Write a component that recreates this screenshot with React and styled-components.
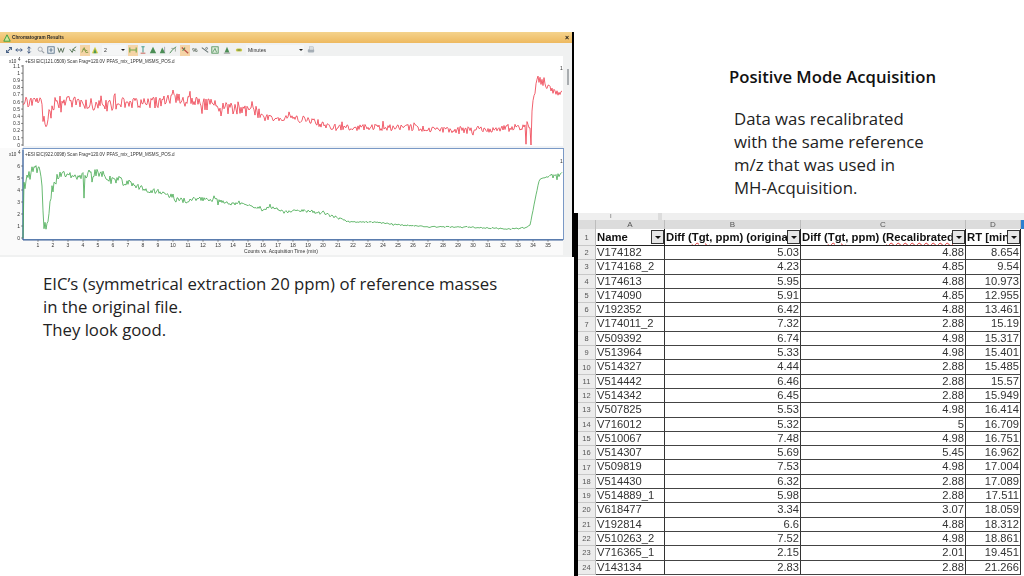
import React, { useMemo } from "react";
import styled, { createGlobalStyle } from "styled-components";

const Global = createGlobalStyle`
  html, body { margin: 0; padding: 0; background: #fff; }
  body { width: 1024px; height: 576px; overflow: hidden; font-family: "Open Sans", sans-serif; }
`;

const Page = styled.div`
  display: flex;
  width: 1024px;
  height: 576px;
  overflow: hidden;
  background: #fff;
`;
const LeftColumn = styled.section`
  width: 574px;
  flex: none;
  padding-top: 32px;
  box-sizing: border-box;
`;
const RightColumn = styled.section`
  flex: 1;
  display: flex;
  flex-direction: column;
  min-width: 0;
`;
const ChromWindow = styled.div`
  height: 225px;
  box-sizing: border-box;
  border-right: 2px solid #000;
  background: #f0f1f1;
  display: flex;
  flex-direction: column;
  filter: blur(0.35px);
`;
const TitleBar = styled.div`
  height: 11px;
  flex: none;
  display: flex;
  align-items: center;
  gap: 1px;
  padding: 0 3px;
  background: linear-gradient(#f4d38d, #eeb95f);
  font: bold 4.7px "Liberation Sans", sans-serif;
  color: #2a2a2a;
`;
const CloseMark = styled.span`
  margin-left: auto;
  font-size: 7px;
  line-height: 1;
  color: #111;
`;
const Toolbar = styled.div`
  height: 13px;
  flex: none;
  display: flex;
  align-items: center;
  padding: 1px 0 0 4px;
  box-sizing: border-box;
  gap: 2px;
  background: #f0f1f1;
`;
const ToolGroup = styled.div`
  display: flex;
  align-items: center;
`;
const ToolButton = styled.span`
  width: 10px;
  height: 11px;
  display: flex;
  align-items: center;
  justify-content: center;
  background: ${(p) => (p.$on ? "#f7cf9a" : "transparent")};
  font: bold 6px "Liberation Sans", sans-serif;
  color: #3a4a3a;
  opacity: 0.85;
`;
const ToolSelect = styled.span`
  width: ${(p) => p.$w}px;
  height: 10px;
  flex: none;
  display: flex;
  align-items: center;
  justify-content: space-between;
  box-sizing: border-box;
  padding: 0 1px 0 2px;
  background: #f5f6f6;
  font: 5.2px "Liberation Sans", sans-serif;
  color: #333;
  &::after {
    content: "";
    border: 2px solid transparent;
    border-top: 2.5px solid #222;
    border-bottom: 0;
  }
`;
const Plot = styled.svg`
  display: block;
  flex: none;
  width: 572px;
  height: ${(p) => p.$h}px;
  text {
    font-family: "Liberation Sans", sans-serif;
    font-size: 5px;
    fill: #333;
  }
`;
const TraceLabel = styled.text`
  && { font-size: 4.56px; }
`;
const Title = styled.h2`
  margin: 0;
  padding: 66px 0 0 155px;
  font: 600 16.7px/21px "Open Sans", sans-serif;
  color: #111;
`;
const Para = styled.p`
  margin: 0;
  font: 400 16.75px/23px "Open Sans", sans-serif;
  color: #222;
  white-space: pre-line;
`;
const RecalNote = styled(Para)`
  padding: 20px 0 0 160px;
`;
const Notes = styled.div`
  height: 213px;
  flex: none;
`;
const EicNote = styled(Para)`
  padding: 15px 0 0 43px;
`;
const Sheet = styled.div`
  flex: 1;
  border-left: 4px solid #000;
  background: #fff;
  display: flex;
  flex-direction: column;
  overflow: hidden;
  font-family: "Liberation Sans", sans-serif;
  filter: blur(0.25px);
`;
const Ruler = styled.div`
  height: 7px;
  flex: none;
  background: linear-gradient(90deg, #efefef 0 80px, #dcdcdc 80px 84px, #efefef 84px);
  font-size: 6px;
  line-height: 7px;
  color: #666;
  padding-left: 32px;
`;
const Grid = styled.div`
  display: grid;
  grid-template-columns: 18px 69px 136px 165px 55px 3px;
  grid-template-rows: 9px 17px repeat(24, 14.3px);
`;
const ColHead = styled.div`
  background: #dcdcdc;
  border-right: 1px solid #bdbdbd;
  font-size: 8px;
  line-height: 9px;
  text-align: center;
  color: #555;
  ${(p) => p.$accent && "background: #2a7fd0; border: 0;"}
`;
const RowHead = styled.div`
  background: #ececec;
  border-right: 1px solid #bbb;
  border-bottom: 1px solid #c8c8c8;
  font-size: 7.5px;
  text-align: center;
  color: #555;
  display: flex;
  align-items: center;
  justify-content: center;
`;
const Cell = styled.div`
  box-sizing: border-box;
  border-right: 1.2px solid #333;
  border-bottom: 1.2px solid #444;
  font-size: 11.2px;
  line-height: 13px;
  color: #333;
  padding: 0 1px;
  white-space: nowrap;
  overflow: hidden;
  text-align: ${(p) => (p.$num ? "right" : "left")};
`;
const HeadCell = styled.div`
  box-sizing: border-box;
  position: relative;
  border-right: 1.2px solid #222;
  border-bottom: 1.2px solid #222;
  font-size: 11.3px;
  font-weight: bold;
  line-height: 16px;
  color: #111;
  padding: 0 1px;
  white-space: nowrap;
  overflow: hidden;
`;
const FilterButton = styled.span`
  position: absolute;
  top: 1px;
  right: 0;
  width: 13px;
  height: 14px;
  box-sizing: border-box;
  background: #e6e6e6;
  border: 1px solid #333;
  display: flex;
  align-items: center;
  justify-content: center;
  &::after {
    content: "";
    border: 3px solid transparent;
    border-top: 3px solid #111;
    border-bottom: 0;
  }
`;
const Spell = styled.span`
  text-decoration: underline wavy #d33;
  text-decoration-thickness: 0.7px;
  text-underline-offset: 1px;
`;
const Blank = styled.div`
  background: #fff;
`;

/* ---------- chart data ---------- */
const RED = [[23,102],[30,101],[41,100],[43,118],[45,125],[50,112],[55,102],[70,102],[85,103],[100,106],[112,105],[125,102],[140,103],[160,103],[172,99],[190,101],[205,104],[220,107],[235,109],[250,111],[265,117],[290,118],[310,120],[330,127],[350,128],[400,127],[450,130],[500,129],[525,127],[526,145],[527,127],[530,127],[531,145],[532,112],[533,104],[535,90],[537,78],[545,84],[555,92],[562,95]];
const GREEN = [[23,238],[24,182],[30,172],[38,169],[41,175],[42,190],[44,228],[48,222],[52,190],[57,178],[65,173],[83,176],[84,197],[85,176],[100,172],[110,180],[130,183],[145,190],[160,192],[175,198],[185,200],[210,199],[230,203],[250,205],[262,210],[270,207],[285,212],[300,210],[325,214],[340,218],[348,222],[375,222],[390,224],[430,227],[470,227],[510,229],[525,228],[530,225],[534,205],[538,185],[540,179],[550,176],[562,175]];

function interp(pts, x) {
  for (let i = 1; i < pts.length; i++) {
    if (x <= pts[i][0]) {
      const [a, b] = pts[i - 1];
      const [c, d] = pts[i];
      return b + ((d - b) * (x - a)) / (c - a);
    }
  }
  return pts[pts.length - 1][1];
}
function tracePath(pts, ampAt, seed, floor) {
  let s = seed;
  const rnd = () => {
    s = (s * 16807) % 2147483647;
    return s / 2147483647 - 0.5;
  };
  let d = "";
  for (let x = pts[0][0]; x <= 562; x += 1) {
    const spike = rnd() > 0.4 ? 1.9 : 1;
    const y = Math.min(floor, interp(pts, x) + rnd() * ampAt(x) * spike);
    d += `${d ? "L" : "M"}${x} ${y.toFixed(1)}`;
  }
  return d;
}

const redAmp = (x) => (x < 270 ? 12 : x < 525 ? 7 : 7);
const greenAmp = (x) => (x < 24 ? 0 : x < 130 ? 9 : x < 220 ? 5 : x < 340 ? 3.2 : x < 525 ? 1.3 : x < 550 ? 1 : 6);

function AxisY({ ticks, x = 23 }) {
  return (
    <>
      {ticks.map(([label, y]) => (
        <g key={label}>
          <line x1={x - 2} x2={x} y1={y} y2={y} stroke="#444" strokeWidth="0.6" />
          <text x={x - 3} y={y + 1.7} textAnchor="end">{label}</text>
        </g>
      ))}
    </>
  );
}

function ChromPlots() {
  const red = useMemo(() => tracePath(RED, redAmp, 4711, 145), []);
  const green = useMemo(() => tracePath(GREEN, greenAmp, 991, 238), []);
  const redTicks = ["1.1","1","0.9","0.8","0.7","0.6","0.5","0.4","0.3","0.2","0.1","0"].map((l, i) => [l, 66 + i * 7.18]);
  const greenTicks = [6,5,4,3,2,1,0].map((n, i) => [String(n), 166 + i * 12]);
  const minutes = Array.from({ length: 35 }, (_, i) => i + 1);
  return (
    <>
      <Plot $h={92} viewBox="0 56 572 92">
        <rect x="0" y="56" width="563" height="92" fill="#fff" />
        <rect x="567" y="69" width="2" height="16" fill="#a9adb0" />
        <TraceLabel x="9" y="63">x10</TraceLabel>
        <TraceLabel x="18" y="61">4</TraceLabel>
        <TraceLabel x="25" y="63">+ESI EIC(121.0509) Scan Frag=120.0V PFAS_mix_1PPM_MSMS_POS.d</TraceLabel>
        <line x1="23" x2="23" y1="65" y2="146" stroke="#444" strokeWidth="0.8" />
        <AxisY ticks={redTicks} />
        <text x="560" y="70">1</text>
        <path d={red} fill="none" stroke="#ee4454" strokeWidth="0.85" />
        <line x1="23" x2="563" y1="147" y2="147" stroke="#d5dde6" strokeWidth="0.8" />
      </Plot>
      <Plot $h={109} viewBox="0 148 572 109">
        <rect x="0" y="148" width="563" height="107" fill="#fafafa" />
        <rect x="23" y="148.5" width="540.5" height="91" fill="#fff" stroke="#6d8fc0" strokeWidth="0.9" />
        <TraceLabel x="9" y="156">x10</TraceLabel>
        <TraceLabel x="18" y="154">4</TraceLabel>
        <TraceLabel x="25" y="156">+ESI EIC(922.0098) Scan Frag=120.0V PFAS_mix_1PPM_MSMS_POS.d</TraceLabel>
        <AxisY ticks={greenTicks} />
        <line x1="23" x2="23" y1="150" y2="240" stroke="#3a5f96" strokeWidth="1" />
        <line x1="23" x2="563" y1="240" y2="240" stroke="#3a5f96" strokeWidth="1" />
        <text x="560" y="163">1</text>
        <path d={green} fill="none" stroke="#43a84e" strokeWidth="0.8" />
        {minutes.map((m) => (
          <g key={m}>
            <line x1={23 + m * 15} x2={23 + m * 15} y1="240" y2="242" stroke="#444" strokeWidth="0.5" />
            <text x={23 + m * 15} y="246.5" textAnchor="middle">{m}</text>
          </g>
        ))}
        <text x="281" y="253" textAnchor="middle">Counts vs. Acquisition Time (min)</text>
      </Plot>
    </>
  );
}

/* ---------- toolbar icons ---------- */
const Ico = ({ children, size = 8 }) => (
  <svg width={size} height={size} viewBox="0 0 10 10" fill="none">{children}</svg>
);
const BLUE = "#22406e";
const GRN = "#2f7d3a";
const ICONS = {
  diag: <path d="M3 7L7 3M2 5V8H5M5 2H8V5" stroke={BLUE} strokeWidth="1.3" />,
  horiz: <path d="M1 5H9M3 3L1 5L3 7M7 3L9 5L7 7" stroke={BLUE} strokeWidth="1.2" />,
  vert: <path d="M5 1V9M3 3L5 1L7 3M3 7L5 9L7 7" stroke={BLUE} strokeWidth="1.2" />,
  lens: <><circle cx="4" cy="4" r="2.6" stroke="#8a9199" /><path d="M6 6L9 9" stroke="#8a9199" strokeWidth="1.4" /></>,
  box: <><rect x="1" y="1" width="8" height="8" stroke="#33506f" fill="#e8eef2" /><path d="M5 2.5V7.5M3 5H7" stroke="#33506f" /></>,
  peaks: <path d="M1 2L3 8L5 3L7 8L9 2" stroke="#3c5a3c" strokeWidth="1.2" />,
  check: <path d="M1 4L4 8L6 3M6 3L9 1M4 4L8 6" stroke="#39603a" strokeWidth="1.2" />,
  peakOn: <path d="M1 8L4 2L6 8H9M2 4L8 6" stroke="#6c8a20" strokeWidth="1.1" />,
  yellowTri: <><path d="M5 1L9 9H1Z" fill="#d7c92c" /><path d="M5 3L7 9H3Z" fill="#2f8a3a" /></>,
  hBar: <path d="M1 2V8M9 2V8M1 5H9" stroke="#5a9a2a" strokeWidth="1.4" />,
  tee: <><path d="M3 1H7M5 1V8" stroke="#2b8a7a" strokeWidth="1.3" /><path d="M2 9H8" stroke="#c0392b" strokeWidth="1.1" /></>,
  tri: <path d="M5 1L9 9H1Z" fill={GRN} />,
  triGrey: <><path d="M4 2L8 9H1Z" fill={GRN} /><path d="M7 1V8" stroke="#889" /></>,
  line: <><path d="M1 9L5 4L9 1" stroke={GRN} strokeWidth="1.2" /><path d="M3 3H8V7" stroke="#7a8a7a" /></>,
  hatch: <><path d="M1 2L9 9" stroke="#b3392b" strokeWidth="1.6" /><path d="M2 6L5 2" stroke={GRN} strokeWidth="1.3" /></>,
  slash: <><path d="M1 2L9 8" stroke="#4a5a5a" strokeWidth="1.3" /><circle cx="7" cy="3" r="1.2" stroke="#4a5a5a" /></>,
  gBox: <><rect x="1" y="1" width="8" height="8" stroke={GRN} fill="#dfeedd" /><path d="M2 8L5 3L7 8" stroke={GRN} /></>,
  triSm: <><path d="M5 1L8 8H2Z" fill={GRN} /><path d="M1 9H9" stroke="#777" /></>,
  pill: <><rect x="1" y="3" width="8" height="4" rx="2" fill="#c9c62c" /><rect x="3" y="4" width="4" height="2" fill="#6a8a2a" /></>,
  printer: <><rect x="1" y="4" width="8" height="4" rx="1" fill="#9aa4ad" /><rect x="3" y="1" width="5" height="4" fill="#d4dbe0" stroke="#8e979e" strokeWidth="0.5" /></>,
  logo: <><path d="M5 1L9 9H1Z" stroke="#2f9a3c" strokeWidth="1.1" fill="#cfe89a" /></>,
};
const Tool = ({ name, on }) => (
  <ToolButton $on={on}><Ico>{ICONS[name]}</Ico></ToolButton>
);

function ChromToolbar() {
  return (
    <Toolbar>
      <ToolGroup><Tool name="diag" /><Tool name="horiz" /><Tool name="vert" /></ToolGroup>
      <ToolGroup><Tool name="lens" /><Tool name="box" /><Tool name="peaks" /></ToolGroup>
      <ToolGroup><Tool name="check" /></ToolGroup>
      <ToolGroup><Tool name="peakOn" on /><Tool name="yellowTri" /></ToolGroup>
      <ToolSelect $w={24}>2</ToolSelect>
      <ToolGroup>
        <Tool name="hBar" on /><Tool name="tee" /><Tool name="tri" /><Tool name="triGrey" /><Tool name="line" />
      </ToolGroup>
      <ToolGroup>
        <Tool name="hatch" on /><ToolButton>%</ToolButton><Tool name="slash" /><Tool name="gBox" />
      </ToolGroup>
      <ToolGroup><Tool name="triSm" /></ToolGroup>
      <ToolGroup><Tool name="pill" /></ToolGroup>
      <ToolSelect $w={58}>Minutes</ToolSelect>
      <Tool name="printer" />
    </Toolbar>
  );
}

/* ---------- sheet data ---------- */
const ROWS = [
  ["V174182","5.03","4.88","8.654"],["V174168_2","4.23","4.85","9.54"],["V174613","5.95","4.88","10.973"],
  ["V174090","5.91","4.85","12.955"],["V192352","6.42","4.88","13.461"],["V174011_2","7.32","2.88","15.19"],
  ["V509392","6.74","4.98","15.317"],["V513964","5.33","4.98","15.401"],["V514327","4.44","2.88","15.485"],
  ["V514442","6.46","2.88","15.57"],["V514342","6.45","2.88","15.949"],["V507825","5.53","4.98","16.414"],
  ["V716012","5.32","5","16.709"],["V510067","7.48","4.98","16.751"],["V514307","5.69","5.45","16.962"],
  ["V509819","7.53","4.98","17.004"],["V514430","6.32","2.88","17.089"],["V514889_1","5.98","2.88","17.511"],
  ["V618477","3.34","3.07","18.059"],["V192814","6.6","4.88","18.312"],["V510263_2","7.52","4.98","18.861"],
  ["V716365_1","2.15","2.01","19.451"],["V143134","2.83","2.88","21.266"],
];

function Spreadsheet() {
  return (
    <Sheet>
      <Ruler>I</Ruler>
      <Grid>
        <ColHead />
        <ColHead>A</ColHead><ColHead>B</ColHead><ColHead>C</ColHead><ColHead>D</ColHead><ColHead $accent />
        <RowHead>1</RowHead>
        <HeadCell>Name<FilterButton /></HeadCell>
        <HeadCell>Diff (<Spell>Tgt</Spell>, ppm) (original)<FilterButton /></HeadCell>
        <HeadCell>Diff (<Spell>Tgt</Spell>, ppm) (<Spell>Recalibrated</Spell>)<FilterButton /></HeadCell>
        <HeadCell>RT [min]<FilterButton /></HeadCell>
        <Blank />
        {ROWS.map((r, i) => (
          <React.Fragment key={r[0]}>
            <RowHead>{i + 2}</RowHead>
            <Cell>{r[0]}</Cell>
            <Cell $num>{r[1]}</Cell>
            <Cell $num>{r[2]}</Cell>
            <Cell $num>{r[3]}</Cell>
            <Blank />
          </React.Fragment>
        ))}
      </Grid>
    </Sheet>
  );
}

export default function App() {
  return (
    <Page>
      <Global />
      <LeftColumn>
        <ChromWindow>
          <TitleBar>
            <Ico size={8}>{ICONS.logo}</Ico>
            Chromatogram Results
            <CloseMark>×</CloseMark>
          </TitleBar>
          <ChromToolbar />
          <ChromPlots />
        </ChromWindow>
        <EicNote>{"EIC’s (symmetrical extraction 20 ppm) of reference masses\nin the original file.\nThey look good."}</EicNote>
      </LeftColumn>
      <RightColumn>
        <Notes>
          <Title>Positive Mode Acquisition</Title>
          <RecalNote>{"Data was recalibrated\nwith the same reference\nm/z that was used in\nMH-Acquisition."}</RecalNote>
        </Notes>
        <Spreadsheet />
      </RightColumn>
    </Page>
  );
}
